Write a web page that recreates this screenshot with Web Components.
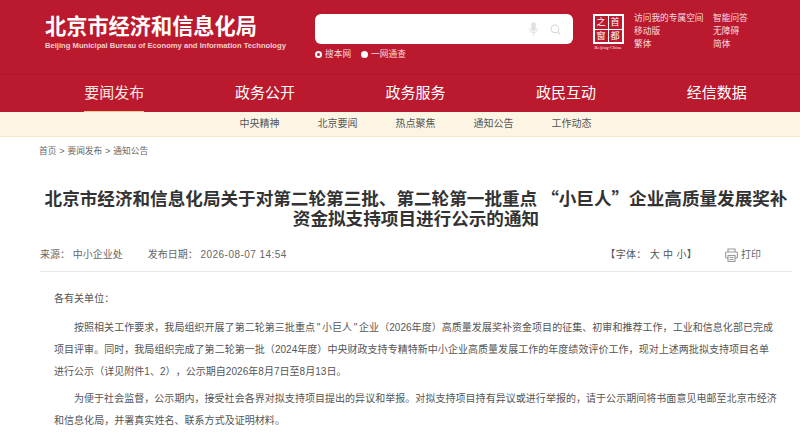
<!DOCTYPE html>
<html lang="zh-CN"><head><meta charset="utf-8"><title>通知</title>
<style>
html,body{margin:0;padding:0;background:#fff;height:440px;overflow:hidden}
body{font-family:"Liberation Sans","Noto Sans CJK SC",sans-serif}
</style></head><body>
<site-header></site-header>
<main-nav></main-nav>
<sub-nav></sub-nav>
<bread-crumb></bread-crumb>
<article-view></article-view>
<script>
function def(name,html){customElements.define(name,class extends HTMLElement{constructor(){super();this.attachShadow({mode:'open'}).innerHTML=html}})}
def('site-header',`<style>
:host{display:flex;height:74px;background:#bb1a2e;box-sizing:border-box;padding:14px 0 0 45px;color:#fff}
.brand{width:270px;margin-top:-1px}
h1{margin:0;font:bold 21.2px/24px "Noto Sans CJK SC",sans-serif;letter-spacing:0;color:#fff}
.en{margin-top:3px;font:bold 7.63px/11px "Liberation Sans",sans-serif;color:#f3cdd1;white-space:nowrap}
.search{width:258px;margin-right:18px}
.box{height:30px;border-radius:6px;background:#fff;display:flex;align-items:center;justify-content:flex-end;gap:12px;padding-right:12px}
.opts{display:flex;gap:10px;margin-top:5px;font-size:8.7px;line-height:11px;color:#f6d9dc}
.opts span{display:flex;align-items:center;gap:3px}
i{width:7px;height:7px;border-radius:50%;background:#fff;box-sizing:border-box;display:block}
i.on{background:#bb1a2e;border:2px solid #fff}
.logo{width:34px;margin-right:9px;display:flex;flex-direction:column;align-items:center}
.sq{width:31px;height:30px;box-sizing:border-box;border:2px solid #fff;display:grid;grid-template-columns:1fr 1fr;grid-template-rows:1fr 1fr;gap:1px;background:#fff}
.sq b{background:#bb1a2e;font:400 9px/12px "Noto Sans CJK SC",sans-serif;text-align:center;color:#fff;overflow:hidden}
.cap{font:4.2px/5px "Liberation Serif",serif;letter-spacing:.25px;color:#fff;white-space:nowrap;margin-top:1px}
.links{display:grid;grid-template-columns:79px auto;grid-auto-rows:13px;font-size:8.7px;line-height:13px;color:#f8dfe1;white-space:nowrap;margin-top:-2px}
</style>
<div class="brand"><h1>北京市经济和信息化局</h1><div class="en">Beijing Municipal Bureau of Economy and Information Technology</div></div>
<div class="search"><div class="box">
<svg width="9" height="14" viewBox="0 0 10 15"><rect x="2.500" y="0" width="5" height="10" rx="2.500" fill="#e0e0e0"/><path d="M1 6v1.500a4 4 0 0 0 8 0V6M5 11.500V15" fill="none" stroke="#e4e4e4" stroke-width="1.200"/></svg>
<svg width="11" height="11" viewBox="0 0 13 13"><circle cx="5.800" cy="5.800" r="4.500" fill="none" stroke="#d6d6d6" stroke-width="1.200"/><path d="M9.200 9.200l3 3" stroke="#d6d6d6" stroke-width="1.300"/></svg>
</div><div class="opts"><span><i class="on"></i>搜本网</span><span><i></i>一网通查</span></div></div>
<div class="logo"><div class="sq"><b>之</b><b>首</b><b>窗</b><b>都</b></div><div class="cap">Beijing-China</div></div>
<div class="links"><span>访问我的专属空间</span><span>智能问答</span><span>移动版</span><span>无障碍</span><span>繁体</span><span>简体</span></div>`);
def('main-nav',`<style>
:host{display:flex;height:38px;background:#bb1a2e;border-top:1px solid #a81628;box-sizing:border-box;padding:0 8px 0 39px}
a{flex:1;display:flex;justify-content:center;color:#fff;font-size:15px;line-height:35px;height:37px}
span{display:block;height:37px;box-sizing:border-box}
.on span{border-bottom:1px solid #f7c98f;color:#fbe6e0}
</style><a class="on"><span>要闻发布</span></a><a><span>政务公开</span></a><a><span>政务服务</span></a><a><span>政民互动</span></a><a><span>经信数据</span></a>`);
def('sub-nav',`<style>
:host{display:flex;justify-content:center;gap:38px;height:25px;background:#fdf5e3;border-bottom:1px solid #f6e5c6;box-sizing:border-box;font-size:10px;line-height:24px;color:#555;padding-left:31px}
</style><span>中央精神</span><span>北京要闻</span><span>热点聚焦</span><span>通知公告</span><span>工作动态</span>`);
def('bread-crumb',`<style>
:host{display:block;padding:8px 0 0 39px;height:31px;box-sizing:border-box;font-size:8.7px;line-height:13px;color:#666;word-spacing:.6px}
</style>首页 &gt; 要闻发布 &gt; 通知公告`);
def('article-view',`<style>
:host{display:block;margin-left:40px;width:752px}
h2{margin:0;padding-top:20px;font:bold 17.6px/20px "Noto Sans CJK SC",sans-serif;color:#333;text-align:center}
.meta{display:flex;align-items:center;height:24px;margin-top:15px;padding-bottom:4px;border-bottom:1px solid #e8e8e8;font-size:10px;line-height:24px;color:#666}
.meta .d{margin-left:25px}
.meta .d b{font-weight:400;letter-spacing:.45px}
.meta .gap{flex:1}
.fs{color:#555;letter-spacing:.3px}
.pr{display:flex;align-items:center;gap:3px;margin:0 31px 0 28px;color:#666}
.body{padding:16px 14px 0 14px;font-size:10px;line-height:22px;color:#555;letter-spacing:.04px;text-spacing-trim:space-all}
p{margin:0 0 5px}
p:first-child{margin-bottom:7px}
p.i{text-indent:20px}
</style>
<h2>北京市经济和信息化局关于对第二轮第三批、第二轮第一批重点 “小巨人”企业高质量发展奖补资金拟支持项目进行公示的通知</h2>
<div class="meta"><span>来源： 中小企业处</span><span class="d">发布日期： <b>2026-08-07 14:54</b></span><span class="gap"></span><span class="fs">【字体： 大 中 小】</span><span class="pr"><svg width="13" height="14" viewBox="0 0 13 14" fill="none" stroke="#999" stroke-width="1.100"><path d="M3 4V1h7v3M3 10H1.500A1 1 0 0 1 .6 9V5a1 1 0 0 1 1-1h9.800a1 1 0 0 1 1 1v4a1 1 0 0 1-1 1H10"/><rect x="3" y="7.500" width="7" height="6"/><path d="M4.500 9.500h4M4.500 11.500h4"/></svg>打印</span></div>
<div class="body"><p>各有关单位：</p>
<p class="i">按照相关工作要求，我局组织开展了第二轮第三批重点&#8198;"&#8198;小巨人&#8198;"&#8198;企业（2026年度）高质量发展奖补资金项目的征集、初审和推荐工作，工业和信息化部已完成项目评审。同时，我局组织完成了第二轮第一批（2024年度）中央财政支持专精特新中小企业高质量发展工作的年度绩效评价工作，现对上述两批拟支持项目名单进行公示（详见附件1、2），公示期自2026年8月7日至8月13日。</p>
<p class="i">为便于社会监督，公示期内，接受社会各界对拟支持项目提出的异议和举报。对拟支持项目持有异议或进行举报的，请于公示期间将书面意见电邮至北京市经济和信息化局，并署真实姓名、联系方式及证明材料。</p></div>`);
</script></body></html>
